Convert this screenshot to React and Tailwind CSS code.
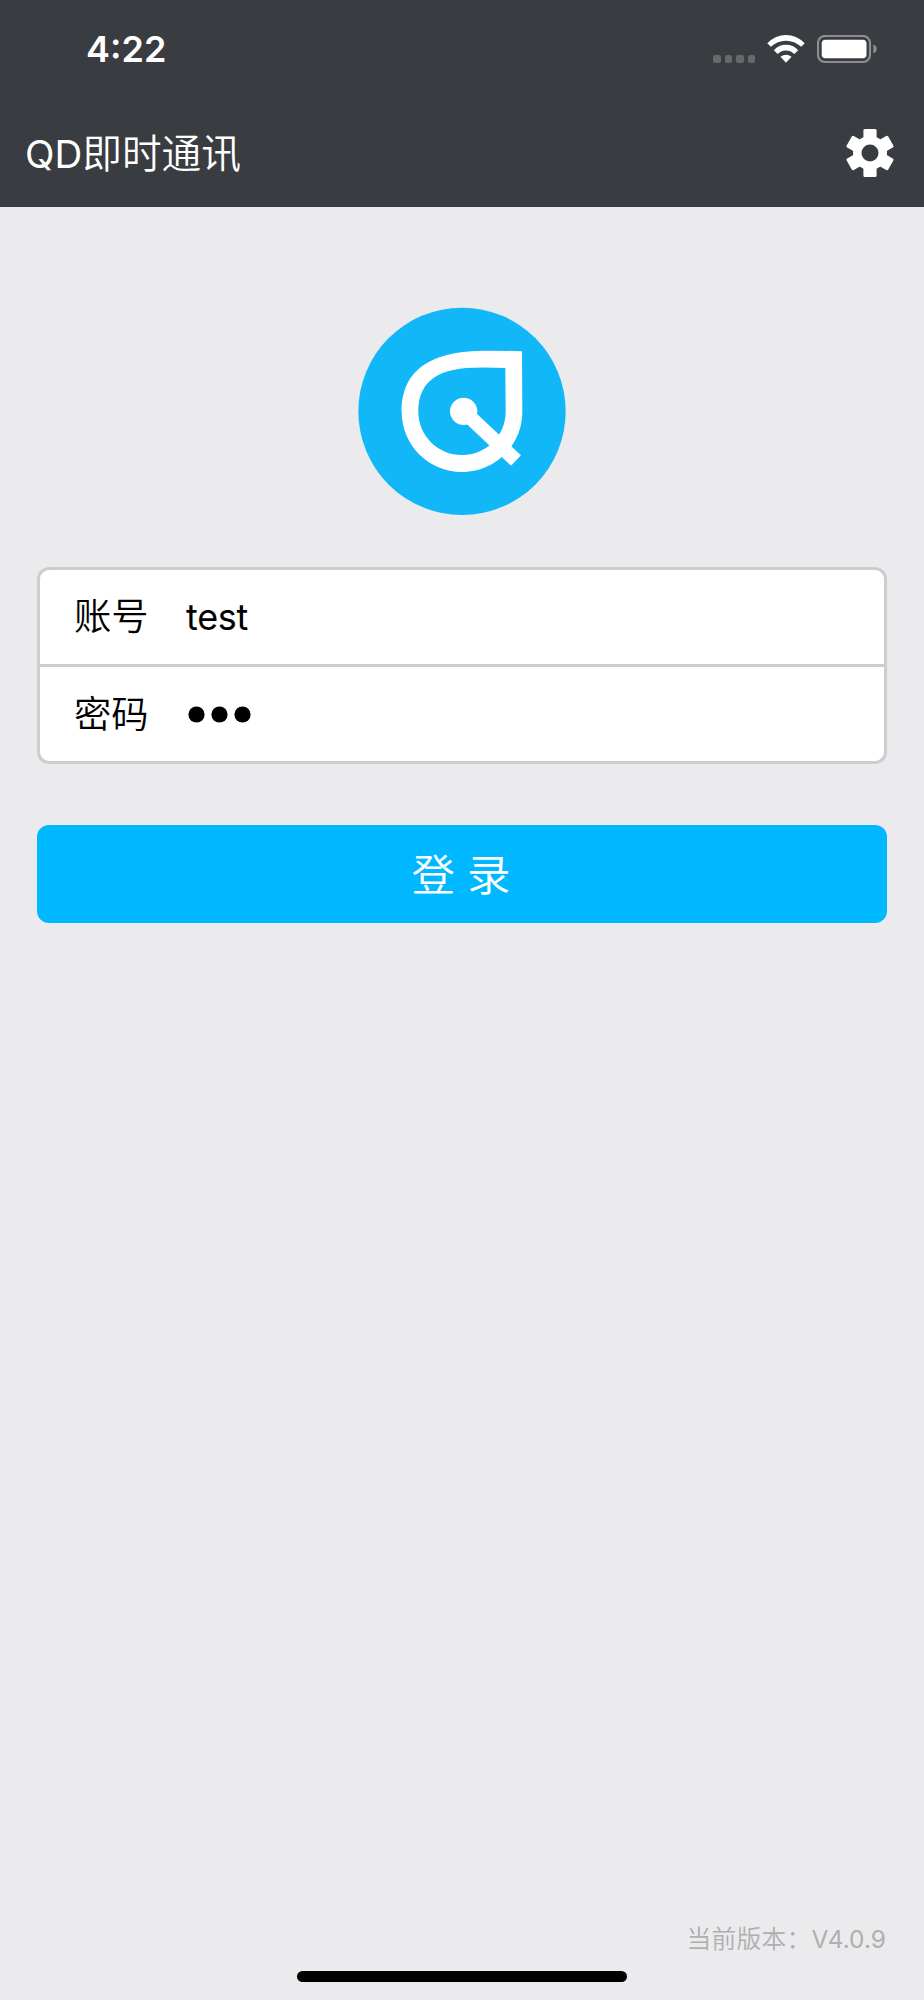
import { useState } from 'react';

function StatusBar() {
  return (
    <div className="flex h-[98px] items-center justify-between pl-[86px] pr-[47px]">
      <span className="text-[36px] leading-none font-semibold">4:22</span>
      <div className="flex items-center">
        {/* no signal dots */}
        <div className="mt-[20px] mr-3 flex gap-[4px]">
          {[0, 1, 2, 3].map((i) => (
            <i key={i} className="h-[7.5px] w-[7.5px] rounded-[2px] bg-[#66686b]" />
          ))}
        </div>
        <svg className="mr-[12px] h-[28px] w-[38px]" viewBox="0 0 38 28" fill="#fff">
          <path d="M.3 8.300Q8.500 0 19 0T37.700 8.300L34.200 11.800Q27.500 5.700 19 5.700T3.800 11.800Z" />
          <path d="M6.800 15.200Q12 9.800 19 9.800T31.200 15.200L27.300 18.900Q23.500 15.500 19 15.500T10.700 18.900Z" />
          <path d="M13.400 21.800Q19 17.500 24.600 21.800L19 27.800Z" />
        </svg>
        <svg className="h-[28px] w-[60px]" viewBox="0 0 60 28">
          <rect x="1" y="1" width="52" height="26" rx="7" fill="none" stroke="#8b8d90" strokeWidth="2.200" />
          <rect x="4.700" y="4.700" width="44.800" height="18.600" rx="3.800" fill="#fff" />
          <path d="M56.300 9.500q3.400 1.400 3.400 4.500t-3.400 4.500Z" fill="#8b8d90" />
        </svg>
      </div>
    </div>
  );
}

function GearIcon() {
  return (
    <svg className="h-[50px] w-[50px]" viewBox="-25 -25 50 50">
      <mask id="hole">
        <rect x="-25" y="-25" width="50" height="50" fill="#fff" />
        <circle r="8.500" fill="#000" />
      </mask>
      <g fill="#fff" mask="url(#hole)">
        <circle r="17" />
        <rect x="-6.600" y="-24" width="13.200" height="48" rx="1.500" />
        <rect x="-6.600" y="-24" width="13.200" height="48" rx="1.500" transform="rotate(60)" />
        <rect x="-6.600" y="-24" width="13.200" height="48" rx="1.500" transform="rotate(120)" />
      </g>
    </svg>
  );
}

function Logo() {
  return (
    <svg className="h-[208px] w-[208px]" viewBox="54 51 624 624">
      <circle cx="366" cy="364" r="311" fill="#11b7f7" />
      <path
        fill="#fff"
        fillRule="evenodd"
        d="M546 184L547 365C547 465 466 546 366 546S185 465 185 365C185 272 232 184 430 182Q490 181.500 546 184ZM496 234Q455 232 400 233C280 236 235 285 235 365C235 437 294 495 366 495S497 437 497 365Z"
      />
      <circle cx="371" cy="364" r="41" fill="#fff" />
      <path d="M371 364L528 511.500" stroke="#fff" strokeWidth="43" />
    </svg>
  );
}

export default function App() {
  const [account, setAccount] = useState('test');
  const [password, setPassword] = useState('123');

  return (
    <div className="flex h-[2000px] w-[924px] flex-col bg-[#ebebed] font-['Inter','Noto_Sans_CJK_SC',sans-serif] text-black">
      <header className="h-[207px] bg-[#393c40] text-white">
        <StatusBar />
        <div className="flex h-[109px] items-center justify-between pr-[29.500px] pl-[25px]">
          <h1 className="pt-[4px] text-[39.700px] leading-none font-[350]">
            <span className="text-[38.500px] font-normal">QD</span>即时通讯
          </h1>
          <button>
            <GearIcon />
          </button>
        </div>
      </header>

      <main className="flex flex-1 flex-col px-[37px] pt-[100px]">
        <div className="flex justify-center">
          <Logo />
        </div>

        <div className="mt-[52px] h-[197px] rounded-[12px] border-[3px] border-[#cbcecf] bg-white text-[37.300px]">
          <label className="flex h-[97px] items-center border-b-[3px] border-[#cbcecf] pl-[34px]">
            <span className="w-[112px] font-[350]">账号</span>
            <input
              className="flex-1 pb-[1px] text-[36px] tracking-[-0.3px] outline-none"
              value={account}
              onChange={(e) => setAccount(e.target.value)}
            />
          </label>
          <label className="flex h-[94px] items-center pl-[34px]">
            <span className="w-[112px] pt-[2px] font-[350]">密码</span>
            <input
              type="password"
              className="sr-only"
              value={password}
              onChange={(e) => setPassword(e.target.value)}
            />
            <span className="ml-[2px] flex gap-[6px]">
              {password.split('').map((_, i) => (
                <svg key={i} className="h-[17px] w-[17px]" viewBox="0 0 17 17">
                  <circle cx="8.5" cy="8.5" r="8.100" />
                </svg>
              ))}
            </span>
          </label>
        </div>

        <button className="mt-[61px] h-[98px] rounded-[12px] bg-[#00b8ff] pt-[3px] pr-[2px] text-[43.500px] font-[350] text-white">
          登 录
        </button>

        <p className="mt-auto mb-[14px] flex items-center justify-end pr-[1px] text-[24.800px] leading-[36px] font-[350] text-[#afafb0]">
          <span className="tracking-[0.2px]">当前版本：</span>
          <span className="text-[24.500px] font-normal">V4.0.9</span>
        </p>
      </main>

      <div className="mx-auto mb-[18px] h-[11px] w-[330px] rounded-full bg-black" />
    </div>
  );
}
